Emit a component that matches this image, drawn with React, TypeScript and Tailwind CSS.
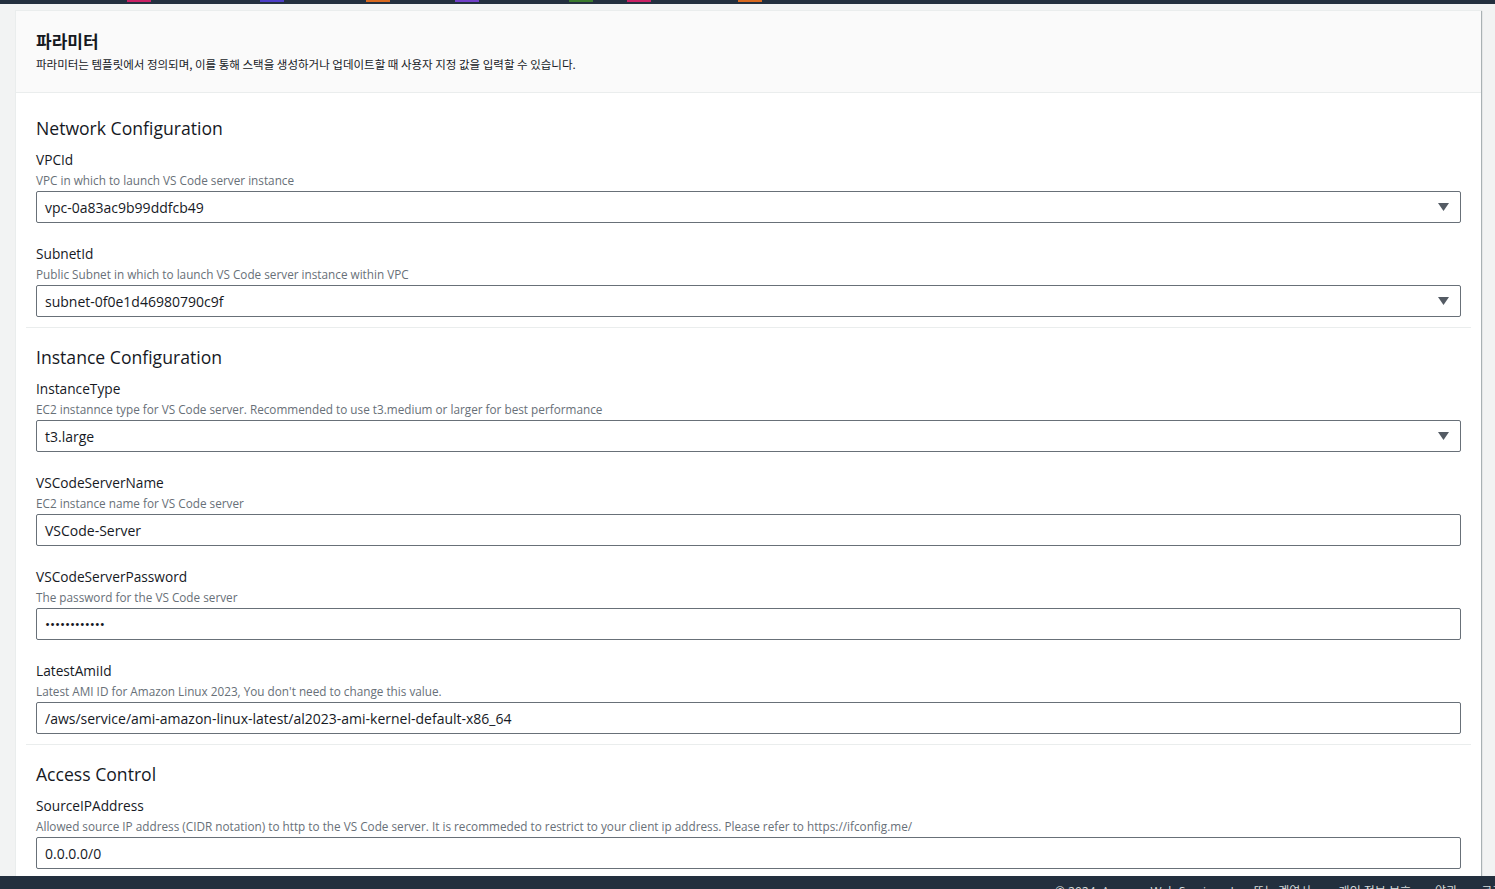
import React from 'react';

type Field = {
    label: string;
    description: string;
    value: string;
    select?: boolean;
    password?: boolean;
};

const sections: { title: string; fields: Field[] }[] = [
    {
        title: 'Network Configuration',
        fields: [
            { label: 'VPCId', description: 'VPC in which to launch VS Code server instance', value: 'vpc-0a83ac9b99ddfcb49', select: true },
            { label: 'SubnetId', description: 'Public Subnet in which to launch VS Code server instance within VPC', value: 'subnet-0f0e1d46980790c9f', select: true },
        ],
    },
    {
        title: 'Instance Configuration',
        fields: [
            { label: 'InstanceType', description: 'EC2 instannce type for VS Code server. Recommended to use t3.medium or larger for best performance', value: 't3.large', select: true },
            { label: 'VSCodeServerName', description: 'EC2 instance name for VS Code server', value: 'VSCode-Server' },
            { label: 'VSCodeServerPassword', description: 'The password for the VS Code server', value: '••••••••••••', password: true },
            { label: 'LatestAmiId', description: "Latest AMI ID for Amazon Linux 2023, You don't need to change this value.", value: '/aws/service/ami-amazon-linux-latest/al2023-ami-kernel-default-x86_64' },
        ],
    },
    {
        title: 'Access Control',
        fields: [
            { label: 'SourceIPAddress', description: 'Allowed source IP address (CIDR notation) to http to the VS Code server. It is recommeded to restrict to your client ip address. Please refer to https://ifconfig.me/', value: '0.0.0.0/0' },
        ],
    },
];

const stripes = [
    { left: 'ml-[127px]', color: 'bg-[#c91f63]' },
    { left: 'ml-[109px]', color: 'bg-[#4b3dc6]' },
    { left: 'ml-[82px]', color: 'bg-[#d8691f]' },
    { left: 'ml-[65px]', color: 'bg-[#7140c8]' },
    { left: 'ml-[90px]', color: 'bg-[#3a7a2c]' },
    { left: 'ml-[34px]', color: 'bg-[#c91f63]' },
    { left: 'ml-[87px]', color: 'bg-[#d8691f]' },
];

function Caret() {
    return (
        <svg width="11" height="8" viewBox="0 0 11 8" aria-hidden="true">
            <path d="M0 0h11L5.5 8z" fill="#545b64" />
        </svg>
    );
}

function FieldRow({ field }: { field: Field }) {
    return (
        <div className="flex flex-col">
            <div className="text-[13.7px] leading-5 text-[#16191f]">{field.label}</div>
            <div className="text-[11.75px] leading-[18px] mt-px font-medium text-[#687078]">{field.description}</div>
            <div className="mt-0.5 h-8 flex items-center justify-between border border-[#687078] rounded-[2px] bg-white pl-2 pr-[11px]">
                <span
                    className={
                        field.password
                            ? 'text-[13.5px] tracking-[-0.1px] text-[#16191f]'
                            : 'text-[14px] text-[#16191f]'
                    }
                >
                    {field.value}
                </span>
                {field.select && <Caret />}
            </div>
        </div>
    );
}

export default function App() {
    return (
        <div className="h-screen flex flex-col bg-[#f2f3f3] overflow-hidden font-['Open_Sans','Noto_Sans_CJK_KR',sans-serif]">
            {/* Top nav strip */}
            <div className="h-1 shrink-0 bg-[#232f3e] flex items-start">
                {stripes.map((s, i) => (
                    <div key={i} className={`${s.left} w-6 h-0.5 ${s.color}`} />
                ))}
            </div>

            <div className="flex-1 min-h-0 overflow-hidden pt-1.5 pl-[15px] pr-[14px]">
                <div className="bg-white border-l border-t border-[#eaeded] shadow-[1px_1px_1px_0_rgba(0,28,36,0.3)]">
                    {/* Header */}
                    <div className="bg-[#fafafa] border-b border-[#eaeded] px-5 pt-5 pb-[19px]">
                        <h1 className="text-[17px] leading-5 font-bold text-[#16191f] font-['Noto_Sans_CJK_KR',sans-serif]">
                            파라미터
                        </h1>
                        <p className="mt-1 text-[11.5px] leading-[18px] text-[#16191f] font-['Noto_Sans_CJK_KR',sans-serif]">
                            파라미터는 템플릿에서 정의되며, 이를 통해 스택을 생성하거나 업데이트할 때 사용자 지정 값을 입력할 수 있습니다.
                        </p>
                    </div>

                    {/* Body */}
                    <div className="px-2.5 pt-1.5">
                        {sections.map((sec, i) => (
                            <div
                                key={sec.title}
                                className={`px-2.5 pt-[18px] pb-2.5 ${i < sections.length - 1 ? 'border-b border-[#eaeded]' : ''}`}
                            >
                                <h2 className="text-[17.6px] leading-[22px] text-[#16191f]">{sec.title}</h2>
                                <div className="mt-[11px] flex flex-col gap-[21px]">
                                    {sec.fields.map((f) => (
                                        <FieldRow key={f.label} field={f} />
                                    ))}
                                </div>
                            </div>
                        ))}
                    </div>
                </div>
            </div>

            {/* Footer */}
            <div className="h-[13px] shrink-0 bg-[#232f3e] overflow-hidden">
                <div className="flex gap-6 whitespace-nowrap pl-[1055px] pt-2 text-[12px] leading-4 text-[#d5dbdb] font-['Open_Sans','Noto_Sans_CJK_KR',sans-serif]">
                    <span>© 2024, Amazon Web Services, Inc. 또는 계열사.</span>
                    <span>개인 정보 보호</span>
                    <span>약관</span>
                    <span>쿠키 기본 설정</span>
                </div>
            </div>
        </div>
    );
}
